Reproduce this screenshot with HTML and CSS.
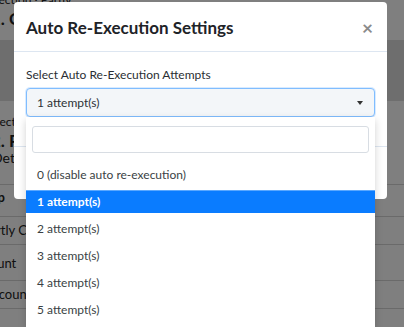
FILE: index.html
```html
<!DOCTYPE html>
<html lang="en">
<head>
    <meta charset="UTF-8">
    <meta name="viewport" content="width=device-width, initial-scale=1.0">
    <title>Auto Re-Execution Settings</title>
    <link rel="stylesheet" href="styles.css">
</head>
<body>
    <div class="page">
        <div class="page-top">
            <p class="crumbs">Section · Partly</p>
            <h3 class="page-title">1. Collection Run</h3>
        </div>
        <div class="page-band"></div>
        <div class="page-section">
            <p class="crumbs">Section</p>
            <h3 class="page-title">2. Payment Flow</h3>
            <p class="details">Details</p>
        </div>
        <div class="page-table">
            <div class="row head">Step</div>
            <div class="row">Partly Completed</div>
            <div class="row tall">Account</div>
            <div class="row">Account Details</div>
            <div class="row"></div>
        </div>
    </div>

    <div class="overlay"></div>

    <div class="modal">
        <div class="modal-header">
            <h2>Auto Re-Execution Settings</h2>
            <span class="close">&times;</span>
        </div>
        <div class="modal-body">
            <label class="field-label">Select Auto Re-Execution Attempts</label>
            <div class="select-wrapper">
                <div class="select-box">
                    <span>1 attempt(s)</span>
                    <span class="caret"></span>
                </div>
                <div class="dropdown">
                    <div class="search">
                        <input type="text">
                    </div>
                    <ul class="options">
                        <li>0 (disable auto re-execution)</li>
                        <li class="selected">1 attempt(s)</li>
                        <li>2 attempt(s)</li>
                        <li>3 attempt(s)</li>
                        <li>4 attempt(s)</li>
                        <li>5 attempt(s)</li>
                    </ul>
                </div>
            </div>
        </div>
        <div class="modal-footer"></div>
    </div>
</body>
</html>
```

FILE: styles.css
```css
* {
    margin: 0;
    padding: 0;
    box-sizing: border-box;
}

body {
    font-family: Lato, 'Open Sans', sans-serif;
    background: #ffffff;
    width: 404px;
    height: 327px;
    overflow: hidden;
    position: relative;
}

/* page behind the modal */
.page {
    color: #222;
    white-space: nowrap;
}

.page-top {
    height: 46px;
}

.page-top .crumbs {
    font-size: 12px;
    line-height: 12px;
    margin-top: -6px;
    margin-left: -8px;
}

.page-title {
    font-size: 17px;
    font-weight: bold;
    margin-top: 2px;
    margin-left: -9px;
}

.page-band {
    height: 61px;
    background: #dcdcdc;
}

.page-section {
    padding-top: 13px;
    height: 83px;
}

.page-section .crumbs {
    font-size: 12px;
    margin-left: -7px;
}

.page-section .page-title {
    margin-top: 1px;
}

.page-section .details {
    font-size: 14px;
    margin-top: -2px;
    margin-left: -8px;
}

.page-table {
    border-top: 1px solid #d4d4d4;
}

.page-table .row {
    font-size: 13px;
    height: 28px;
    line-height: 27px;
    border-bottom: 1px solid #d4d4d4;
}

.page-table .row.head {
    font-weight: bold;
    height: 32px;
    line-height: 24px;
    text-indent: -21px;
}

.page-table .row:nth-child(2) {
    text-indent: -18px;
}

.page-table .row.tall {
    height: 36px;
    line-height: 36px;
    text-indent: -31px;
}

.page-table .row:nth-child(4) {
    text-indent: -16px;
}

.overlay {
    position: absolute;
    inset: 0;
    background: rgba(0, 0, 0, 0.5);
}

/* modal */
.modal {
    position: absolute;
    left: 14px;
    top: 2px;
    width: 373px;
    height: 197px;
    background: #fff;
    border-radius: 4px;
    display: flex;
    flex-direction: column;
}

.modal-header {
    height: 50px;
    padding: 0 12px;
    display: flex;
    align-items: center;
    justify-content: space-between;
    border-bottom: 1px solid #dde6f1;
}

.modal-header h2 {
    font-size: 17px;
    font-weight: bold;
    color: #1e2328;
    margin-top: 1px;
}

.close {
    font-size: 19px;
    font-weight: bold;
    color: #8a8a8a;
    margin-right: 2px;
    margin-top: 1px;
}

.modal-body {
    padding: 14px 12px 0;
    height: 95px;
    border-bottom: 1px solid #dde6f1;
}

.field-label {
    display: block;
    font-size: 12px;
    line-height: 18px;
    color: #2a2e33;
    margin-bottom: 4px;
}

.select-wrapper {
    position: relative;
}

.select-box {
    height: 29px;
    border: 1px solid #80bdff;
    border-radius: 4px;
    background: #f3f6f9;
    box-shadow: 0 0 0 1px rgba(0, 123, 255, 0.15);
    display: flex;
    align-items: center;
    justify-content: space-between;
    padding: 0 10px;
    font-size: 12px;
    color: #2d3136;
}

.caret {
    width: 0;
    height: 0;
    border-left: 3.5px solid transparent;
    border-right: 3.5px solid transparent;
    border-top: 4px solid #333;
    margin-right: 1px;
}

.dropdown {
    position: absolute;
    top: 100%;
    left: 0;
    right: 0;
    height: 210px;
    background: #fff;
    box-shadow: 0 3px 8px rgba(0, 0, 0, 0.18);
    padding: 9px 6px 0;
}

.search input {
    width: 100%;
    height: 27px;
    border: 1px solid #d8dde3;
    border-radius: 3px;
    outline: none;
    background: #fff;
}

.options {
    list-style: none;
    margin: 10px -6px 0;
}

.options li {
    height: 23px;
    line-height: 23px;
    margin-bottom: 4px;
    padding-left: 11px;
    font-size: 12px;
    color: #3a3f44;
}

.options li.selected {
    background: #0a7cff;
    color: #fff;
    font-weight: bold;
    box-shadow: inset 0 1px 0 #5aa8ff;
}
```
